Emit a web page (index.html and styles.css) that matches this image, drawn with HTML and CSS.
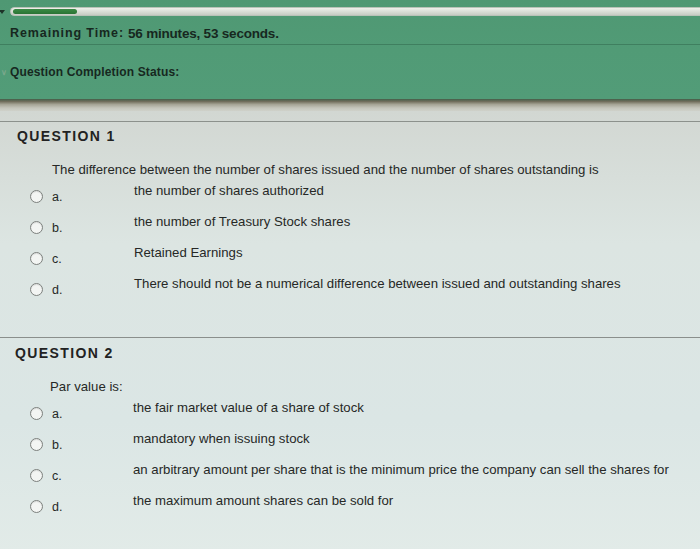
FILE: index.html
```html
<!DOCTYPE html>
<html>
<head>
<meta charset="utf-8">
<link rel="stylesheet" href="styles.css">
</head>
<body>
<div class="page">
  <header class="header">
    <div class="progress-row">
      <span class="caret"></span>
      <div class="track"><div class="fill"></div></div>
    </div>
    <div class="time-row">
      <span class="time-label">Remaining Time:</span>
      <span class="time-value">56 minutes, 53 seconds.</span>
    </div>
    <div class="status-row">
      <span class="chev">&#8744;</span>
      <span class="status-label">Question Completion Status:</span>
    </div>
  </header>
  <div class="shade"></div>
  <main class="content">
    <section class="question">
      <h2 class="q-title">QUESTION 1</h2>
      <p class="q-prompt">The difference between the number of shares issued and the number of shares outstanding is</p>
      <div class="options">
        <div class="opt"><span class="radio"></span><span class="letter">a.</span><span class="answer">the number of shares authorized</span></div>
        <div class="opt"><span class="radio"></span><span class="letter">b.</span><span class="answer">the number of Treasury Stock shares</span></div>
        <div class="opt"><span class="radio"></span><span class="letter">c.</span><span class="answer">Retained Earnings</span></div>
        <div class="opt"><span class="radio"></span><span class="letter">d.</span><span class="answer">There should not be a numerical difference between issued and outstanding shares</span></div>
      </div>
    </section>
    <section class="question q2">
      <h2 class="q-title">QUESTION 2</h2>
      <p class="q-prompt">Par value is:</p>
      <div class="options">
        <div class="opt"><span class="radio"></span><span class="letter">a.</span><span class="answer">the fair market value of a share of stock</span></div>
        <div class="opt"><span class="radio"></span><span class="letter">b.</span><span class="answer">mandatory when issuing stock</span></div>
        <div class="opt"><span class="radio"></span><span class="letter">c.</span><span class="answer">an arbitrary amount per share that is the minimum price the company can sell the shares for</span></div>
        <div class="opt"><span class="radio"></span><span class="letter">d.</span><span class="answer">the maximum amount shares can be sold for</span></div>
      </div>
    </section>
  </main>
</div>
</body>
</html>
```

FILE: styles.css
```css
* { box-sizing: border-box; }
html, body { margin: 0; padding: 0; }
body {
  width: 700px;
  height: 549px;
  overflow: hidden;
  font-family: "Liberation Sans", Arial, sans-serif;
  color: #262826;
  background: #dbe4e1;
}
.page { width: 700px; height: 549px; display: flex; flex-direction: column; overflow: hidden; }

.header {
  flex-shrink: 0;
  height: 99px;
  background: linear-gradient(180deg, #4f9873 0%, #519b76 50%, #529c78 100%);
  display: flex;
  flex-direction: column;
}
.progress-row {
  flex-shrink: 0;
  display: flex;
  align-items: center;
  height: 22px;
  padding-top: 1px;
}
.caret {
  width: 0; height: 0;
  border-left: 3px solid transparent;
  border-right: 3px solid transparent;
  border-top: 4px solid #1d3328;
  margin-left: -1px;
  margin-right: 5px;
}
.track {
  flex: 1;
  height: 9px;
  border-radius: 5px 0 0 5px;
  background: linear-gradient(180deg, #eef0ea 0%, #d6dbd3 60%, #c7ccc4 100%);
  border: 1px solid #b9c2b8;
  border-right: none;
  padding: 1px 2px;
}
.fill {
  width: 64px;
  height: 5px;
  border-radius: 3px;
  background: linear-gradient(180deg, #3b8a45 0%, #2a7434 100%);
}
.time-row {
  flex-shrink: 0;
  height: 23px;
  padding-left: 10px;
  display: flex;
  align-items: center;
  gap: 4px;
  font-weight: bold;
  color: #17281f;
  border-bottom: 1px solid #3f7f5f;
}
.time-label { font-size: 12.5px; letter-spacing: 0.9px; }
.time-value { font-size: 13.5px; letter-spacing: -0.2px; }
.status-row {
  flex-shrink: 0;
  height: 54px;
  display: flex;
  align-items: center;
  padding-left: 1px;
  gap: 3px;
  color: #17281f;
  font-weight: bold;
}
.chev { font-size: 8px; color: #7aa88c; }
.status-label { font-size: 12px; letter-spacing: 0.15px; }

.shade {
  flex-shrink: 0;
  height: 12px;
  background: linear-gradient(180deg, #44604b 0%, #6e6c5a 20%, #a5a495 45%, #c4c5bb 75%, #cfd2ca 100%);
}
.content {
  flex: 1;
  padding-top: 10px;
  background: linear-gradient(180deg, #d2d7d2 0%, #dce5e2 30%, #dbe6e5 70%, #e2ebe8 100%);
}
.question {
  border-top: 1px solid #8c918c;
  padding-bottom: 30px;
}
.q-title {
  margin: 6px 0 0 17px;
  font-size: 14px;
  line-height: 16px;
  letter-spacing: 1.4px;
  font-weight: bold;
  color: #222;
}
.q-prompt {
  margin: 18px 0 0 52px;
  font-size: 13.2px;
  line-height: 16px;
}
.options {
  margin-top: 5px;
  display: flex;
  flex-direction: column;
}
.opt {
  display: grid;
  grid-template-columns: 30px 82px 1fr;
  height: 31px;
  padding-left: 30px;
  align-items: start;
}
.radio {
  width: 13px;
  height: 13px;
  border-radius: 50%;
  border: 1px solid #7c807d;
  background: #f3f5f3;
  margin-top: 7px;
  box-shadow: inset 0 1px 1px rgba(0,0,0,0.1);
}
.letter {
  font-size: 12.5px;
  line-height: 16px;
  padding-top: 6px;
  margin-left: -8px;
}
.answer {
  font-size: 13.2px;
  line-height: 16px;
  margin-left: -8px;
}
.q2 { border-top-color: #8a8f8c; }
.q2 .q-title { margin-top: 7px; margin-left: 15px; }
.q2 .q-prompt { margin-left: 50px; }
.q2 .answer { margin-left: -9px; }
```
